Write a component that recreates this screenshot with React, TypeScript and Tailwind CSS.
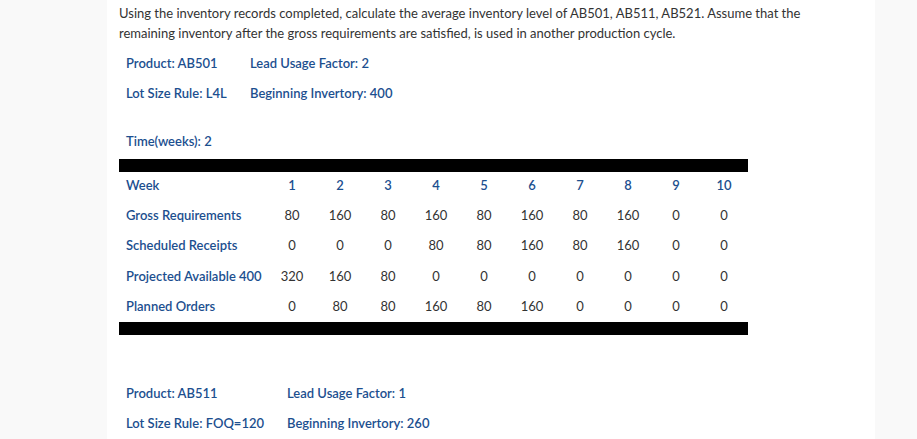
import React from 'react';

const rows = [
  { label: 'Gross Requirements', values: [80, 160, 80, 160, 80, 160, 80, 160, 0, 0] },
  { label: 'Scheduled Receipts', values: [0, 0, 0, 80, 80, 160, 80, 160, 0, 0] },
  { label: 'Projected Available 400', values: [320, 160, 80, 0, 0, 0, 0, 0, 0, 0] },
  { label: 'Planned Orders', values: [0, 80, 80, 160, 80, 160, 0, 0, 0, 0] },
];

const App = () => {
  return (
    <div className="min-h-[439px] bg-[#f9f9f9] flex" style={{ fontFamily: 'Lato, "Open Sans", sans-serif' }}>
      <div className="ml-[107px] w-[768px] bg-white pl-[12px] pt-[3px] text-[13px]">
        <p className="text-[#333] leading-[20px] w-[730px]">
          Using the inventory records completed, calculate the average inventory level of AB501, AB511, AB521. Assume that the remaining inventory after the gross requirements are satisfied, is used in another production cycle.
        </p>

        <div className="text-[#1c4f8f] font-semibold pl-[7px] mt-[6px]">
          <div className="flex h-[30px] items-center">
            <span className="w-[124px]">Product: AB501</span>
            <span>Lead Usage Factor: 2</span>
          </div>
          <div className="flex h-[30px] items-center">
            <span className="w-[124px]">Lot Size Rule: L4L</span>
            <span>Beginning Invertory: 400</span>
          </div>
          <div className="mt-[18px] h-[30px] flex items-center">Time(weeks): 2</div>
        </div>

        <div className="w-[629px] mt-[2px]">
          <div className="h-[13px] bg-black" />
          <div className="flex h-[28px] items-center text-[#1c4f8f] font-semibold">
            <span className="w-[149px] pl-[7px]">Week</span>
            {Array.from({ length: 10 }, (_, i) => (
              <span key={i} className="w-[48px] text-center">{i + 1}</span>
            ))}
          </div>
          {rows.map((row) => (
            <div key={row.label} className="flex h-[30.5px] items-center">
              <span className="w-[149px] pl-[7px] text-[#1c4f8f] font-semibold whitespace-nowrap">{row.label}</span>
              {row.values.map((v, i) => (
                <span key={i} className="w-[48px] text-center text-[#333]">{v}</span>
              ))}
            </div>
          ))}
          <div className="h-[13px] bg-black" />
        </div>

        <div className="text-[#1c4f8f] font-semibold pl-[7px] mt-[44px]">
          <div className="flex h-[30px] items-center">
            <span className="w-[161px]">Product: AB511</span>
            <span>Lead Usage Factor: 1</span>
          </div>
          <div className="flex h-[30px] items-center">
            <span className="w-[161px]">Lot Size Rule: FOQ=120</span>
            <span>Beginning Invertory: 260</span>
          </div>
        </div>
      </div>
    </div>
  );
};

export default App;
